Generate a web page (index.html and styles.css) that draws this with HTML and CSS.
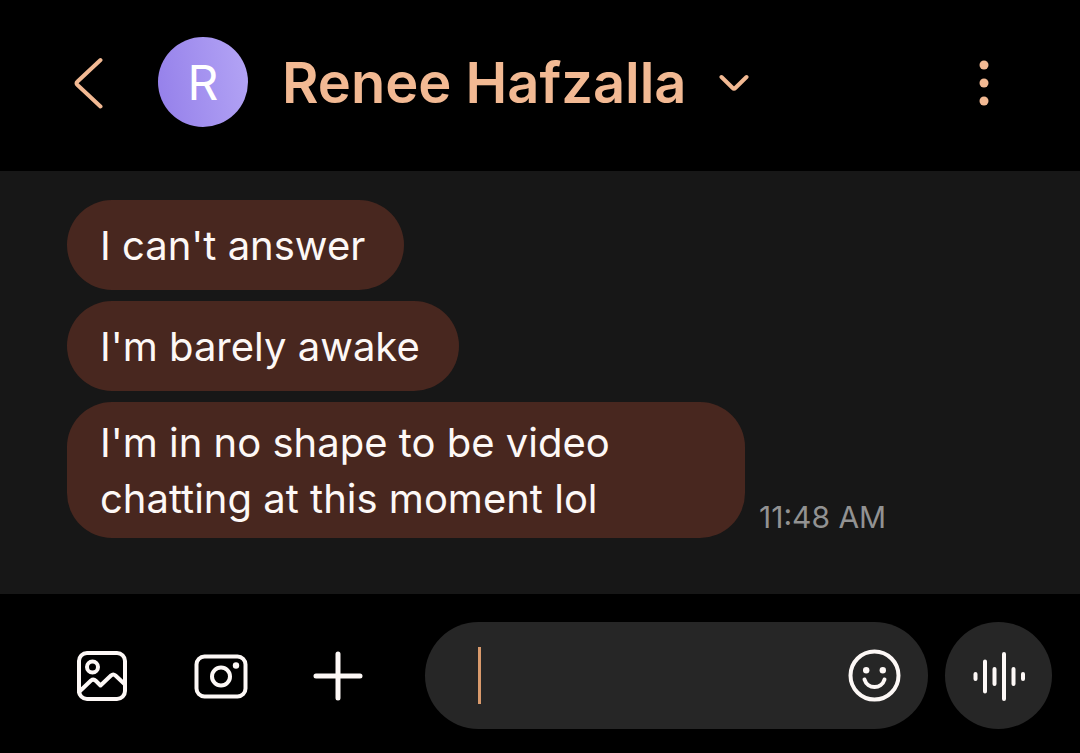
FILE: index.html
```
<!DOCTYPE html>
<html lang="en">
<head>
    <meta charset="UTF-8">
    <meta name="viewport" content="width=device-width, initial-scale=1.0">
    <title>Renee Hafzalla - Messages</title>
    <link rel="stylesheet" href="styles.css">
</head>
<body>
    <header class="chat-header">
        <button type="button" class="icon-btn back-btn" aria-label="Back">
            <svg width="32" height="54" viewBox="0 0 32 54"><path d="M28.500 5 L5.500 26.500 Q3.500 28.200 5.500 30 L28.500 51.500" /></svg>
        </button>
        <div class="avatar">R</div>
        <button type="button" class="contact-btn">
            <h1>Renee Hafzalla</h1>
            <svg width="30" height="18" viewBox="0 0 30 18"><path d="M2.500 3 L13.700 14 Q15 15.300 16.300 14 L27.500 3" /></svg>
        </button>
        <button type="button" class="icon-btn menu-btn" aria-label="More options">
            <svg width="12" height="50" viewBox="0 0 12 50">
                <circle cx="6" cy="8" r="4.500" />
                <circle cx="6" cy="26" r="4.500" />
                <circle cx="6" cy="44" r="4.500" />
            </svg>
        </button>
    </header>

    <main class="messages">
        <p class="bubble">I can't answer</p>
        <p class="bubble">I'm barely awake</p>
        <div class="message-row">
            <p class="bubble">I'm in no shape to be video chatting at this moment lol</p>
            <time class="time" datetime="11:48">11:48 AM</time>
        </div>
    </main>

    <form class="composer">
        <div class="tools">
            <button type="button" class="icon-btn" aria-label="Gallery">
                <svg width="54" height="54" viewBox="0 0 54 54">
                    <rect x="4" y="4" width="46" height="46" rx="8" />
                    <circle cx="17.500" cy="18" r="5.500" />
                    <path d="M4 43 L16 31.500 Q18.500 29.500 21 32 L25.500 36.500 L36 26.500 Q38.200 24.500 40.500 26.500 L50 35.500" />
                </svg>
            </button>
            <button type="button" class="icon-btn" aria-label="Camera">
                <svg width="56" height="54" viewBox="0 0 56 54">
                    <rect x="4.500" y="7.500" width="49" height="40" rx="8" />
                    <circle cx="29" cy="27.500" r="9" />
                    <circle class="fill" cx="44" cy="16.500" r="3.200" />
                </svg>
            </button>
            <button type="button" class="icon-btn" aria-label="Add attachment">
                <svg width="54" height="54" viewBox="0 0 54 54"><path class="plus" d="M27 5 V49 M5 27 H49" /></svg>
            </button>
        </div>
        <div class="field">
            <span class="caret"></span>
            <input type="text" id="message" name="message" aria-label="Message" autocomplete="off">
            <button type="button" class="icon-btn" aria-label="Emoji">
                <svg width="54" height="54" viewBox="0 0 54 54">
                    <circle cx="27.500" cy="26.500" r="24" />
                    <circle class="fill" cx="19.200" cy="21.200" r="3.200" />
                    <circle class="fill" cx="35.800" cy="21.200" r="3.200" />
                    <path d="M17.500 30.500 C20.500 40.500 34.500 40.500 37.500 30.500" />
                </svg>
            </button>
        </div>
        <button type="button" class="icon-btn voice-btn" aria-label="Voice message">
            <svg width="54" height="54" viewBox="0 0 54 54"><path d="M3.500 25 V30 M13 12.500 V42.500 M22.500 20 V35 M32 5 V50 M41.500 20 V35 M51 25 V30" /></svg>
        </button>
    </form>
</body>
</html>
```
FILE: styles.css
```
:root {
    --accent-color: #f2b993;
    --caret-color: #d99a6c;
    --bubble-color: #48271f;
    --chat-color: #171717;
    --field-color: #262626;
    --text-color: #fdf8f6;
    --muted-color: #929292;
}

* {
    margin: 0;
    padding: 0;
    box-sizing: border-box;
}

body {
    display: flex;
    flex-direction: column;
    min-height: 100vh;
    background-color: #000;
    color: var(--text-color);
    font-family: Inter, Roboto, sans-serif;
}

button {
    border: none;
    background: none;
    color: inherit;
    font: inherit;
    cursor: pointer;
}

svg {
    display: block;
    fill: none;
    stroke: currentColor;
    stroke-width: 4;
    stroke-linecap: round;
    stroke-linejoin: round;
}

.icon-btn {
    flex: none;
    display: flex;
    align-items: center;
    justify-content: center;
}

/* Header */
.chat-header {
    display: flex;
    align-items: center;
    padding: 37px 90px 44px 72px;
    color: var(--accent-color);
}

.avatar {
    display: flex;
    align-items: center;
    justify-content: center;
    width: 90px;
    height: 90px;
    margin: 0 34px 0 54px;
    border-radius: 50%;
    background: linear-gradient(80deg, #947fea, #b4a5f5);
    color: #fff;
    font-size: 48px;
}

.contact-btn {
    display: flex;
    align-items: center;
    gap: 32px;
    padding-top: 2px;
}

.contact-btn h1 {
    font-size: 56px;
    font-weight: 600;
    line-height: 72px;
}

.menu-btn {
    margin-left: auto;
}

.menu-btn svg {
    fill: currentColor;
    stroke: none;
}

/* Messages */
.messages {
    flex: 1;
    display: flex;
    flex-direction: column;
    align-items: flex-start;
    gap: 11px;
    padding: 29px 67px 56px;
    background-color: var(--chat-color);
}

.bubble {
    display: flex;
    align-items: center;
    max-width: 678px;
    min-height: 90px;
    padding: 13px 39px 11px 33px;
    border-radius: 45px;
    background-color: var(--bubble-color);
    font-size: 40px;
    line-height: 56px;
}

.message-row {
    display: flex;
    align-items: flex-end;
    gap: 14px;
}

.time {
    color: var(--muted-color);
    font-size: 30px;
    line-height: 42px;
    white-space: nowrap;
}

/* Composer */
.composer {
    display: flex;
    align-items: center;
    padding: 28px 28px 24px 75px;
}

.tools {
    display: flex;
    gap: 63px;
    margin-right: 60px;
}

.field {
    flex: 1;
    display: flex;
    align-items: center;
    min-width: 0;
    height: 107px;
    margin-right: 17px;
    padding: 0 27px 0 53px;
    border-radius: 54px;
    background-color: var(--field-color);
}

.caret {
    width: 3px;
    height: 57px;
    background-color: var(--caret-color);
}

.field input {
    flex: 1;
    min-width: 0;
    border: none;
    outline: none;
    background: none;
    color: inherit;
    caret-color: var(--caret-color);
    font: inherit;
    font-size: 40px;
}

.voice-btn {
    width: 107px;
    height: 107px;
    border-radius: 50%;
    background-color: var(--field-color);
}

.fill {
    fill: currentColor;
    stroke: none;
}

.plus {
    stroke-width: 5;
}
```
